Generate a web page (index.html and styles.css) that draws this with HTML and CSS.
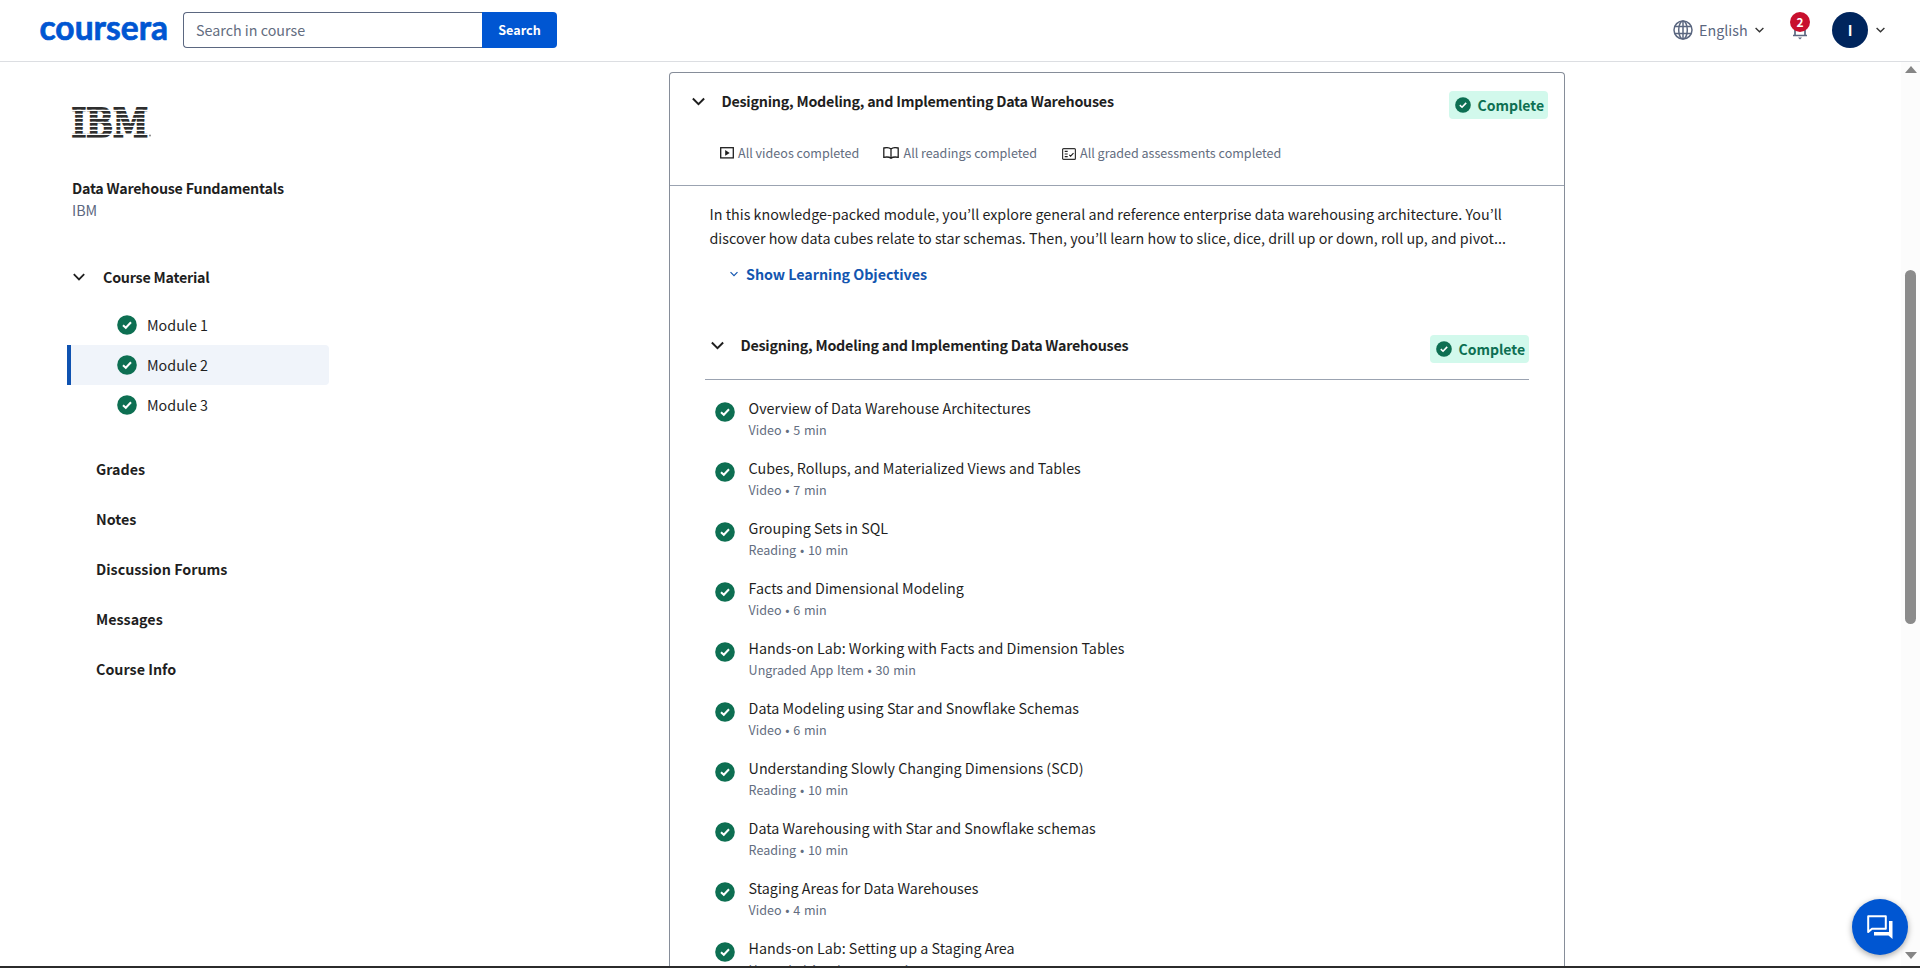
FILE: index.html
```
<!DOCTYPE html>
<html lang="en">
<head>
<meta charset="utf-8">
<title>Data Warehouse Fundamentals</title>
<link rel="stylesheet" href="styles.css">
</head>
<body>
<svg class="defs" width="0" height="0">
  <symbol id="check" viewBox="0 0 20 20"><circle cx="10" cy="10" r="9.8" fill="#0d6f52"/><path d="M6 10.2 8.8 12.8 14 7.3" fill="none" stroke="#fff" stroke-width="2"/></symbol>
  <symbol id="down" viewBox="0 0 12 8"><path d="M.8 1.2 6 6.4l5.200-5.200" fill="none" stroke="currentColor" stroke-width="1.8"/></symbol>
</svg>
<header class="top">
  <div class="brand"><svg width="130" height="56" viewBox="0 0 130 56"><text x="0.500" y="37.500" class="brand-text" textLength="128.500" lengthAdjust="spacingAndGlyphs">coursera</text></svg></div>
  <div class="search"><div class="search-input">Search in course</div><div class="search-btn">Search</div></div>
  <div class="tools">
    <svg class="globe" width="20" height="20" viewBox="0 0 20 20" fill="none" stroke="#5b6780" stroke-width="1.500"><circle cx="10" cy="10" r="9"/><ellipse cx="10" cy="10" rx="4.300" ry="9"/><path d="M10 1v18M1.800 6.500h16.400M1.800 13.500h16.400"/></svg>
    <span class="lang">English</span>
    <svg class="c-lang" width="9" height="6"><use href="#down"/></svg>
    <div class="bell">
      <svg width="16" height="20" viewBox="0 0 16 20"><path d="M3 15V7a5 5 0 0 1 10 0v8M1 15.500h14" fill="none" stroke="#5b6780" stroke-width="1.700"/><path d="M6 17.500h4l-2 2z" fill="#5b6780"/></svg>
      <span class="count">2</span>
    </div>
    <div class="avatar">I</div>
    <svg class="c-user" width="9" height="6"><use href="#down"/></svg>
  </div>
</header>
<div class="page">
  <aside class="side">
    <svg class="ibm" width="80" height="32" viewBox="0 0 80 32">
      <defs><pattern id="stripes" y="1" width="80" height="4" patternUnits="userSpaceOnUse"><rect width="80" height="2.600" fill="#2e2e2e"/></pattern></defs>
      <text x="-0.500" y="30.500" class="ibm-text" fill="url(#stripes)" stroke="url(#stripes)" stroke-width="2" textLength="76.500" lengthAdjust="spacingAndGlyphs">IBM</text>
      <circle cx="78" cy="29.500" r="1" fill="#888"/>
    </svg>
    <div class="course">Data Warehouse Fundamentals</div>
    <div class="org">IBM</div>
    <div class="material"><svg width="12" height="8"><use href="#down"/></svg><span>Course Material</span></div>
    <div class="mod"><svg width="20" height="20"><use href="#check"/></svg>Module 1</div>
    <div class="mod active"><svg width="20" height="20"><use href="#check"/></svg>Module 2</div>
    <div class="mod"><svg width="20" height="20"><use href="#check"/></svg>Module 3</div>
    <nav class="links"><a>Grades</a><a>Notes</a><a>Discussion Forums</a><a>Messages</a><a>Course Info</a></nav>
  </aside>
  <main class="card">
    <section class="card-head">
      <div class="row"><svg width="13" height="9"><use href="#down"/></svg><h2>Designing, Modeling, and Implementing Data Warehouses</h2><div class="badge"><svg width="16" height="16"><use href="#check"/></svg>Complete</div></div>
      <div class="stats">
        <svg width="14" height="12" viewBox="0 0 14 12"><rect x=".7" y=".7" width="12.600" height="10.200" fill="none" stroke="#1f1f1f" stroke-width="1.300"/><path d="M5.200 3v5.800L9.700 5.900z" fill="#1f1f1f"/></svg><span class="s1">All videos completed</span>
        <svg width="16" height="12" viewBox="0 0 16 12"><path d="M8 2C6.500.7 3.500.4.800 1v9.300c2.700-.5 5.700-.3 7.200 1 1.500-1.300 4.500-1.500 7.200-1V1C12.500.4 9.500.7 8 2zM8 2v9" fill="none" stroke="#1f1f1f" stroke-width="1.300"/></svg><span class="s2">All readings completed</span>
        <svg class="quiz" width="14" height="12" viewBox="0 0 14 12"><rect x=".6" y=".6" width="12.800" height="10.800" rx="1" fill="none" stroke="#333" stroke-width="1.200"/><path d="M2.700 3.300h3M2.700 6h3M2.700 8.700h3M7.300 6.800l1.300 1.300 2.900-3" fill="none" stroke="#1f1f1f" stroke-width="1.200"/></svg><span>All graded assessments completed</span>
      </div>
    </section>
    <section class="card-body">
      <p>In this knowledge-packed module, you’ll explore general and reference enterprise data warehousing architecture. You’ll<br>discover how data cubes relate to star schemas. Then, you’ll learn how to slice, dice, drill up or down, roll up, and pivot...</p>
      <div class="objectives"><svg width="8" height="6"><use href="#down"/></svg>Show Learning Objectives</div>
      <div class="row sub"><svg width="13" height="9"><use href="#down"/></svg><h3>Designing, Modeling and Implementing Data Warehouses</h3><div class="badge"><svg width="16" height="16"><use href="#check"/></svg>Complete</div></div>
      <ul class="items">
        <li><svg width="20" height="20"><use href="#check"/></svg><div><b>Overview of Data Warehouse Architectures</b><i>Video • 5 min</i></div></li>
        <li><svg width="20" height="20"><use href="#check"/></svg><div><b>Cubes, Rollups, and Materialized Views and Tables</b><i>Video • 7 min</i></div></li>
        <li><svg width="20" height="20"><use href="#check"/></svg><div><b>Grouping Sets in SQL</b><i>Reading • 10 min</i></div></li>
        <li><svg width="20" height="20"><use href="#check"/></svg><div><b>Facts and Dimensional Modeling</b><i>Video • 6 min</i></div></li>
        <li><svg width="20" height="20"><use href="#check"/></svg><div><b>Hands-on Lab: Working with Facts and Dimension Tables</b><i>Ungraded App Item • 30 min</i></div></li>
        <li><svg width="20" height="20"><use href="#check"/></svg><div><b>Data Modeling using Star and Snowflake Schemas</b><i>Video • 6 min</i></div></li>
        <li><svg width="20" height="20"><use href="#check"/></svg><div><b>Understanding Slowly Changing Dimensions (SCD)</b><i>Reading • 10 min</i></div></li>
        <li><svg width="20" height="20"><use href="#check"/></svg><div><b>Data Warehousing with Star and Snowflake schemas</b><i>Reading • 10 min</i></div></li>
        <li><svg width="20" height="20"><use href="#check"/></svg><div><b>Staging Areas for Data Warehouses</b><i>Video • 4 min</i></div></li>
        <li><svg width="20" height="20"><use href="#check"/></svg><div><b>Hands-on Lab: Setting up a Staging Area</b><i>Ungraded App Item • 30 min</i></div></li>
      </ul>
    </section>
  </main>
  <div class="scroll"><span class="up"></span><span class="thumb"></span><span class="dn"></span></div>
</div>
<div class="edge"></div>
<div class="chat"><svg width="28" height="26" viewBox="0 0 28 26"><path d="M2.200 2.200h17.600v12.600H6L2.200 18z" fill="none" stroke="#fff" stroke-width="2" stroke-linejoin="round"/><path d="M23 7h3.500v18l-4-3.500H8V18h15z" fill="#fff"/></svg></div>
</body>
</html>
```
FILE: styles.css
```
* { box-sizing: border-box; }
body {
  margin: 0;
  height: 968px;
  overflow: hidden;
  background: #fff;
  color: #1f1f1f;
  font: 14.3px/20px "Noto Sans CJK KR", "Noto Sans", sans-serif;
  display: flex;
  flex-direction: column;
}
svg { display: block; flex: none; }
.defs { position: absolute; }
.top {
  height: 62px;
  flex: none;
  border-bottom: 1px solid #dcdee2;
  display: flex;
  align-items: center;
  padding: 0 35px 1px 39px;
}
.brand { width: 144px; }
.brand-text { font: 700 34px Lato, sans-serif; fill: #0056d2; stroke: #0056d2; stroke-width: .7px; }
.search { display: flex; width: 374px; height: 36px; line-height: 34px; }
.search-input {
  width: 299px;
  border: 1px solid #5b6780;
  border-right: 0;
  border-radius: 4px 0 0 4px;
  padding-left: 12px;
  color: #636d80;
}
.search-btn {
  flex: 1;
  background: #0056d2;
  color: #fff;
  border-radius: 0 4px 4px 0;
  text-align: center;
  font-weight: 700;
  font-size: 12.600px;
  line-height: 35px;
}
.tools { margin-left: auto; display: flex; align-items: center; color: #333; }
.lang { margin-left: 6px; width: 56px; color: #5b6780; }
.c-lang { margin-right: 28px; }
.bell { position: relative; width: 16px; height: 20px; margin-right: 24px; }
.count {
  position: absolute;
  left: -2px;
  top: -8px;
  width: 20px;
  height: 20px;
  border-radius: 50%;
  background: #c8102e;
  color: #fff;
  font-size: 12px;
  font-weight: 700;
  text-align: center;
}
.avatar {
  width: 36px;
  height: 36px;
  border-radius: 50%;
  background: #00255d;
  color: #fff;
  font-weight: 700;
  text-align: center;
  line-height: 36px;
  margin-right: 8px;
}
.page { flex: 1; min-height: 0; display: flex; overflow: hidden; }
.side { width: 669px; padding: 44px 0 0 67px; }
.ibm { margin-left: 5px; overflow: visible; }
.ibm-text { font: 700 40px "DejaVu Serif", serif; }
.course { margin: 39px 0 0 5px; font-weight: 700; line-height: 22px; letter-spacing: -.24px; }
.org { margin-left: 5px; color: #5b6780; line-height: 22px; }
.material { display: flex; align-items: center; height: 30px; margin: 41px 0 13px 6px; font-weight: 700; gap: 18px; letter-spacing: -.24px; }
.mod { width: 262px; height: 40px; display: flex; align-items: center; gap: 10px; padding-left: 50px; }
.mod.active { background: #f0f4fa; border-left: 4px solid #0f52b0; border-radius: 0 4px 4px 0; padding-left: 46px; }
.links { display: flex; flex-direction: column; padding: 19px 0 0 29px; }
.links a { height: 50px; line-height: 50px; font-weight: 700; }
.card {
  width: 896px;
  margin-top: 10px;
  overflow: hidden;
  border: 1px solid #868d99;
  border-bottom: 0;
  border-radius: 4px 4px 0 0;
}
.card-head { height: 113px; border-bottom: 1px solid #9ba3b1; padding: 18px 16px 0 21.5px; }
.row { display: flex; align-items: flex-start; }
.row > svg { margin-top: 6px; }
h2, h3 { margin: 0 0 0 17px; font-size: 14.300px; line-height: 20px; font-weight: 700; letter-spacing: -.24px; }
.badge {
  margin-left: auto;
  width: 99px;
  height: 28px;
  border-radius: 4px;
  background: #d2f9ec;
  color: #0d6f52;
  display: flex;
  align-items: center;
  gap: 6.500px;
  padding-left: 6px;
  font-size: 14px;
  font-weight: 700;
}
.stats { display: flex; align-items: center; margin: 24px 0 0 28px; font-size: 12.550px; color: #636d80; }
.stats span { margin-left: 4.500px; }
.s1 { width: 145px; }
.s2 { width: 158px; }
.quiz { margin-top: 2px; }
.card-body { padding: 16px 35px 0 35px; }
p { margin: 0 0 0 4.500px; line-height: 24px; white-space: nowrap; font-size: 14.320px; }
.objectives { display: flex; align-items: center; gap: 8px; margin: 13px 0 0 25px; line-height: 22px; color: #1356b0; font-weight: 700; letter-spacing: -.04px; }
.sub { height: 45px; margin-top: 50px; border-bottom: 1px solid #9ba3b1; padding-left: 5.500px; }
.items { list-style: none; margin: 0; padding: 17px 0 0 10px; }
.items li { height: 60px; display: flex; gap: 13.600px; }
.items li svg { margin-top: 5px; }
.items b { display: block; font-weight: 400; line-height: 22px; }
.items i { display: block; font-style: normal; font-size: 12.550px; word-spacing: .9px; color: #636d80; line-height: 22px; }
.scroll {
  margin-left: auto;
  width: 19px;
  background: #fcfcfc;
  display: flex;
  flex-direction: column;
  align-items: center;
}
.up, .dn { border: 6.500px solid transparent; border-top: 0; border-bottom: 7px solid #858585; margin-top: 4px; }
.thumb { width: 11px; height: 354px; margin-top: 197px; border-radius: 6px; background: #8b8b8b; }
.dn { border-top: 7px solid #858585; border-bottom: 0; margin-top: 328px; }
.edge { height: 2px; flex: none; background: #2b2b2b; z-index: 1; }
.chat {
  position: absolute;
  left: 1852px;
  top: 899px;
  width: 56px;
  height: 56px;
  border-radius: 50%;
  background: #0056d2;
  box-shadow: 0 2px 6px rgba(0, 0, 0, .35);
  display: flex;
  align-items: center;
  justify-content: center;
}
```
